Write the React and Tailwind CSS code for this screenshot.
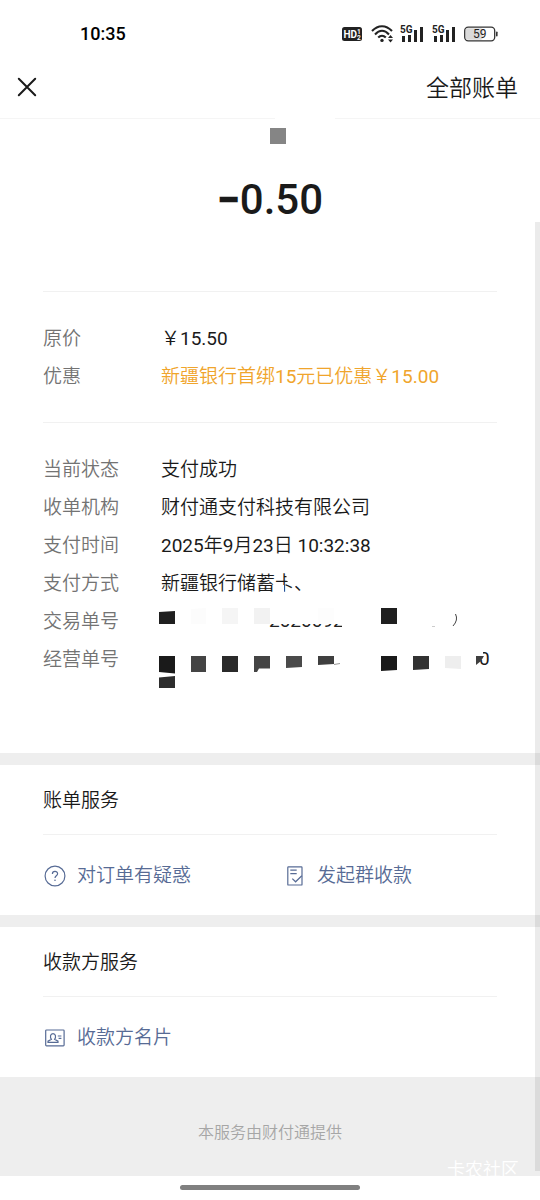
import React from 'react';

const priceRows = [
    { label: '原价', value: '￥15.50' },
    { label: '优惠', value: '新疆银行首绑15元已优惠￥15.00', highlight: true },
];

const detailRows = [
    { label: '当前状态', value: '支付成功' },
    { label: '收单机构', value: '财付通支付科技有限公司' },
    { label: '支付时间', value: '2025年9月23日 10:32:38' },
    { label: '支付方式', value: <CardName /> },
    { label: '交易单号', value: <HiddenTradeNo /> },
    { label: '经营单号', value: <HiddenMerchantNo /> },
];

function SignalIcon() {
    return (
        <svg width="25" height="20" viewBox="0 0 25 20" fill="#222">
            <text x="0" y="9" fontSize="10" fontWeight="700" fontFamily="Roboto" fill="#222">5G</text>
            <rect x="2" y="12" width="3" height="6" />
            <rect x="8" y="11" width="3" height="7" />
            <rect x="14" y="6" width="3" height="12" />
            <rect x="20" y="3" width="3" height="15" />
        </svg>
    );
}

function StatusBar() {
    return (
        <div className="flex h-[60px] items-center justify-between pt-2 pr-[42px] pl-20">
            <p className="text-[18px] leading-6 font-medium text-black">10:35</p>
            <div className="flex items-center">
                <svg className="mr-2" width="22" height="20" viewBox="0 0 22 20">
                    <rect x="1" y="3" width="20" height="14" rx="2.5" fill="#222" />
                    <text x="2.5" y="14" fontSize="10" fontWeight="700" fontFamily="Roboto" fill="#fff">HD</text>
                    <text x="16" y="9.5" fontSize="6.5" fontWeight="700" fontFamily="Roboto" fill="#fff">1</text>
                    <text x="16" y="15.5" fontSize="6.5" fontWeight="700" fontFamily="Roboto" fill="#fff">2</text>
                </svg>
                <svg className="mr-1.5" width="23" height="20" viewBox="0 0 23 20" fill="none" stroke="#222" strokeWidth="2">
                    <path d="M1 7 C7 0.5 15 0.5 21 7" />
                    <path d="M4 10.5 C8.5 5.5 13.5 5.5 18 10.5" />
                    <path d="M7.2 13.5 C9.5 11 12.5 11 14.8 13.5" />
                    <circle cx="11" cy="16.4" r="1.7" fill="#222" stroke="none" />
                    <path d="M17 14 L19.5 11 L22 14 Z M17 15.5 L19.5 18.5 L22 15.5 Z" fill="#222" stroke="none" />
                </svg>
                <span className="mr-[7px]"><SignalIcon /></span>
                <span className="mr-[7px]"><SignalIcon /></span>
                <svg width="34" height="20" viewBox="0 0 34 20">
                    <rect x="1.7" y="4.2" width="17" height="11.6" rx="2" fill="#dadada" />
                    <rect x="0.7" y="3.2" width="30" height="13.6" rx="3.5" fill="none" stroke="#333" strokeWidth="1.3" />
                    <rect x="32" y="7.5" width="1.6" height="5" rx="0.8" fill="#333" />
                    <text x="15.7" y="14.4" fontSize="12" fontWeight="400" fontFamily="Roboto" fill="#222" textAnchor="middle">59</text>
                </svg>
            </div>
        </div>
    );
}

function TopBar() {
    return (
        <header className="flex h-[58px] items-center justify-between pr-[22px] pl-4">
            <button type="button" aria-label="关闭" className="pb-1">
                <svg width="22" height="22" viewBox="0 0 22 22" fill="none" stroke="#1a1a1a" strokeWidth="2" strokeLinecap="round">
                    <path d="M2.8 2.8 L19.2 19.2 M19.2 2.8 L2.8 19.2" />
                </svg>
            </button>
            <button type="button" className="text-[23px] leading-8">全部账单</button>
        </header>
    );
}

function CardName() {
    return (
        <span className="relative">
            新疆银行储蓄卡、
            <svg className="absolute top-0 right-0" width="38" height="22" viewBox="0 0 38 22" fill="#fff">
                <path d="M11.5 0 H20 V16 L11.5 8.5 Z" />
                <path d="M0 13 H9 V22 H0 Z" />
            </svg>
        </span>
    );
}

function HiddenTradeNo() {
    return (
        <svg className="block overflow-visible" width="320" height="38" viewBox="161 603 320 38" aria-hidden="true">
            <defs>
                <clipPath id="digit-edge"><rect x="268" y="624" width="74" height="3" /></clipPath>
            </defs>
            <path d="M159 612 L175 611 V624 H159 Z" fill="#1f1f1f" />
            <path d="M191 609 L206 608 V624 H191 Z" fill="#fcfcfc" />
            <rect x="222" y="608" width="16" height="16" fill="#f5f5f5" />
            <rect x="254" y="608" width="16" height="16" fill="#f2f2f2" />
            <rect x="318" y="608" width="16" height="16" fill="#fdfdfd" />
            <rect x="381" y="608" width="16" height="16" fill="#1f1f1f" />
            <text x="269" y="627" fontSize="19" fill="#222" clipPath="url(#digit-edge)">2020092</text>
            <path d="M432 626.5 H435" stroke="#ccc" />
            <path d="M455.5 614 Q458.5 620 453 626" fill="none" stroke="#444" strokeWidth="1" />
        </svg>
    );
}

function HiddenMerchantNo() {
    return (
        <svg className="block overflow-visible" width="320" height="38" viewBox="161 641 320 38" aria-hidden="true">
            <rect x="159" y="656" width="16" height="15" fill="#1a1a1a" />
            <path d="M159 671 H175 V673.5 L159 672 Z" fill="#1a1a1a" />
            <path d="M159 677.5 L175 676 V688 H159 Z" fill="#2d2d2d" />
            <rect x="191" y="656" width="15" height="16" fill="#444" />
            <rect x="222" y="656" width="16" height="16" fill="#2a2a2a" />
            <path d="M254 656 H270 V668.5 H259 L257 672 H254 Z" fill="#444" />
            <path d="M286 656 H302 V667 L286 668 Z" fill="#4a4a4a" />
            <path d="M318 656 H334 V664 L318 665 Z" fill="#3f3f3f" />
            <path d="M334 664.5 L340 663.5" stroke="#999" fill="none" />
            <path d="M381 656 H397 V670 L381 671 Z" fill="#1a1a1a" />
            <path d="M413 656 H429 V669 L413 670 Z" fill="#323232" />
            <path d="M445 656 H461 V669 L445 668 Z" fill="#eee" />
            <text x="479" y="665" fontSize="19" fill="#1a1a1a">0</text>
            <rect x="478" y="648" width="5" height="12" fill="#fff" />
            <path d="M476 656 H484 L481 661 L476 665 Z" fill="#3f3f3f" />
        </svg>
    );
}

function InfoList({ rows }) {
    return (
        <dl className="text-[19px] leading-[38px]">
            {rows.map((row) => (
                <div key={row.label} className="flex h-[38px]">
                    <dt className="w-[118px] shrink-0 pt-px text-[#737373]">{row.label}</dt>
                    <dd className={row.highlight ? 'pt-px whitespace-nowrap text-[#f0a52c]' : 'pt-px whitespace-nowrap text-[#1a1a1a]'}>
                        {row.value}
                    </dd>
                </div>
            ))}
        </dl>
    );
}

function ServiceButton({ icon, children }) {
    return (
        <button type="button" className="flex items-center gap-[10px] text-[19px] leading-7 text-[#576b95]">
            <span className="flex w-6 justify-center">{icon}</span>
            {children}
        </button>
    );
}

function ServiceSection({ title, children }) {
    return (
        <section className="border-t-12 border-[#eee] px-[43px]">
            <h2 className="h-[69px] pt-px text-[19px] leading-[69px] text-[#1a1a1a]">{title}</h2>
            <div className="grid h-[81px] grid-cols-[240px_1fr] items-center border-t border-[#f1f1f1] pt-px">
                {children}
            </div>
        </section>
    );
}

const questionIcon = (
    <svg width="22" height="22" viewBox="0 0 22 22" fill="none" stroke="#576b95" strokeWidth="1.2">
        <circle cx="11" cy="11" r="9.9" />
        <path d="M8.4 9 C8.4 5.6 13.6 5.6 13.6 8.7 C13.6 10.8 11 10.8 11 13" strokeWidth="1.2" />
        <circle cx="11" cy="15.3" r="0.8" fill="#576b95" stroke="none" />
    </svg>
);

const billIcon = (
    <svg width="16" height="20" viewBox="0 0 16 20" fill="none" stroke="#576b95" strokeWidth="1.2">
        <rect x="0.8" y="0.8" width="14.2" height="18.2" rx="0.6" />
        <path d="M3.3 4.2 H9.7 M3.3 7.7 H9.7 M5.3 12.6 L8.6 15.8 L14.8 9.8" />
    </svg>
);

const cardIcon = (
    <svg width="20" height="18" viewBox="0 0 20 18" fill="none" stroke="#576b95" strokeWidth="1.2">
        <rect x="0.7" y="1" width="18.4" height="15.8" rx="0.8" />
        <path d="M3 13.3 V12.2 L6.4 10.4 C4.8 8.2 5.2 4.6 8 4.6 C10.8 4.6 11.2 8.2 9.6 10.4 L13 12.2 V13.3 Z" />
        <path d="M12.8 7 H16.4 M13.6 9.4 H16.4" />
    </svg>
);

export default function App() {
    return (
        <div className="relative min-h-screen bg-white font-['Roboto','Noto_Sans_CJK_SC_DemiLight','Noto_Sans_CJK_SC',sans-serif] text-[#1a1a1a]">
            <StatusBar />
            <TopBar />
            <div className="flex justify-between">
                <div className="h-px w-[51%] bg-[#f5f5f5]" />
                <div className="h-px w-[38%] bg-[#f5f5f5]" />
            </div>

            <main>
                <div className="px-[43px] pb-[75px]">
                    <div className="flex flex-col items-center pt-[9px] pb-[67px]">
                        <div className="ml-4 h-4 w-4 bg-[#858585]" />
                        <h1 className="mt-8 text-[42px] leading-12 font-medium"><span className="font-black">−</span>0.50</h1>
                    </div>
                    <div className="border-t border-[#f1f1f1] pt-[27px] pb-[27px]">
                        <InfoList rows={priceRows} />
                    </div>
                    <div className="border-t border-[#f1f1f1] pt-[27px]">
                        <InfoList rows={detailRows} />
                    </div>
                </div>

                <ServiceSection title="账单服务">
                    <ServiceButton icon={questionIcon}>对订单有疑惑</ServiceButton>
                    <ServiceButton icon={billIcon}>发起群收款</ServiceButton>
                </ServiceSection>
                <ServiceSection title="收款方服务">
                    <ServiceButton icon={cardIcon}>收款方名片</ServiceButton>
                </ServiceSection>
            </main>

            <footer className="relative h-[99px] bg-[#eee] pt-11 text-center">
                <p className="text-[16px] leading-6 text-[#a6a6a6]">本服务由财付通提供</p>
                <span className="absolute right-[21px] -bottom-2 text-[18px] leading-7 text-white">卡农社区</span>
            </footer>
            <div className="flex h-6 justify-center pt-[9px]">
                <div className="h-[5px] w-1/3 rounded-full bg-[#808080]" />
            </div>

            <div className="absolute top-[222px] right-0 bottom-[29px] w-[5px] bg-black/8" />
        </div>
    );
}
